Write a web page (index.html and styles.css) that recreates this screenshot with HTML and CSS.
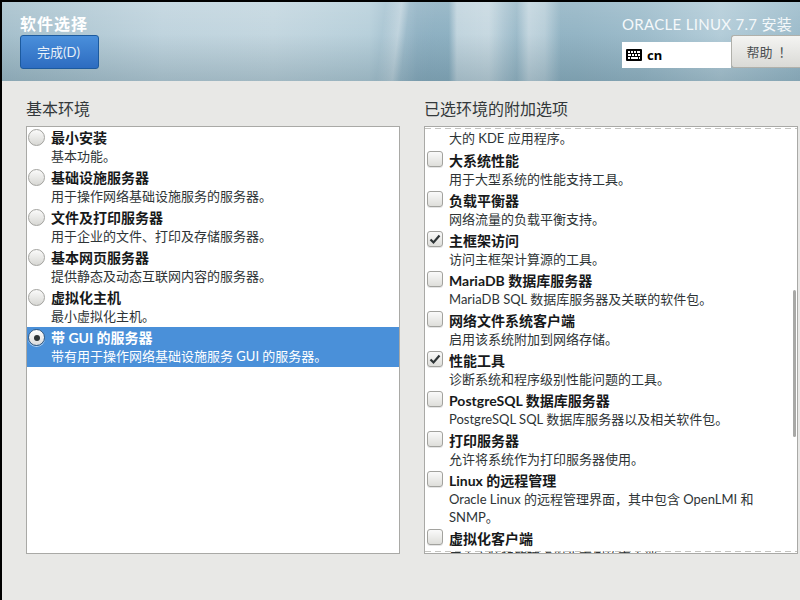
FILE: index.html
```html
<!DOCTYPE html>
<html lang="zh">
<head>
<meta charset="utf-8">
<title>软件选择</title>
<link rel="stylesheet" href="styles.css">
</head>
<body>
<div class="app">
  <header class="header">
    <div class="header-left">
      <h1 class="page-title">软件选择</h1>
      <button class="done-btn">完成(D)</button>
    </div>
    <div class="header-right">
      <div class="product">ORACLE LINUX 7.7 安装</div>
      <div class="tools">
        <div class="kbd">
          <svg class="kbd-icon" width="16" height="12" viewBox="0 0 16 12"><rect width="16" height="12" rx="1" fill="#000"/><g fill="#fff"><rect x="2" y="2" width="2" height="2"/><rect x="5" y="2" width="2" height="2"/><rect x="8" y="2" width="2" height="2"/><rect x="11" y="2" width="3" height="2"/><rect x="2" y="5" width="3" height="2"/><rect x="6" y="5" width="2" height="2"/><rect x="9" y="5" width="2" height="2"/><rect x="12" y="5" width="2" height="2"/><rect x="2" y="8" width="2" height="2"/><rect x="5" y="8" width="7" height="2"/><rect x="13" y="8" width="1" height="2"/></g></svg>
          <span>cn</span>
        </div>
        <button class="help-btn">帮助<span class="bang">！</span></button>
      </div>
    </div>
  </header>
  <main class="content">
    <section class="col">
      <h2 class="col-title">基本环境</h2>
      <div class="box envs">
        <div class="row"><span class="radio"></span><div class="txt"><div class="t">最小安装</div><div class="d">基本功能。</div></div></div>
        <div class="row"><span class="radio"></span><div class="txt"><div class="t">基础设施服务器</div><div class="d">用于操作网络基础设施服务的服务器。</div></div></div>
        <div class="row"><span class="radio"></span><div class="txt"><div class="t">文件及打印服务器</div><div class="d">用于企业的文件、打印及存储服务器。</div></div></div>
        <div class="row"><span class="radio"></span><div class="txt"><div class="t">基本网页服务器</div><div class="d">提供静态及动态互联网内容的服务器。</div></div></div>
        <div class="row"><span class="radio"></span><div class="txt"><div class="t">虚拟化主机</div><div class="d">最小虚拟化主机。</div></div></div>
        <div class="row selected"><span class="radio on"></span><div class="txt"><div class="t">带 GUI 的服务器</div><div class="d">带有用于操作网络基础设施服务 GUI 的服务器。</div></div></div>
      </div>
    </section>
    <section class="col">
      <h2 class="col-title">已选环境的附加选项</h2>
      <div class="box addons">
        <div class="list">
          <div class="partial">大的 KDE 应用程序。</div>
          <div class="row"><span class="check"></span><div class="txt"><div class="t">大系统性能</div><div class="d">用于大型系统的性能支持工具。</div></div></div>
          <div class="row"><span class="check"></span><div class="txt"><div class="t">负载平衡器</div><div class="d">网络流量的负载平衡支持。</div></div></div>
          <div class="row"><span class="check"><svg width="12" height="12" viewBox="0 0 12 12"><path d="M1.5 6.5 L4.5 9.5 L10.5 2.5" fill="none" stroke="#2e3436" stroke-width="2.2"/></svg></span><div class="txt"><div class="t">主框架访问</div><div class="d">访问主框架计算源的工具。</div></div></div>
          <div class="row"><span class="check"></span><div class="txt"><div class="t">MariaDB 数据库服务器</div><div class="d">MariaDB SQL 数据库服务器及关联的软件包。</div></div></div>
          <div class="row"><span class="check"></span><div class="txt"><div class="t">网络文件系统客户端</div><div class="d">启用该系统附加到网络存储。</div></div></div>
          <div class="row"><span class="check"><svg width="12" height="12" viewBox="0 0 12 12"><path d="M1.5 6.5 L4.5 9.5 L10.5 2.5" fill="none" stroke="#2e3436" stroke-width="2.2"/></svg></span><div class="txt"><div class="t">性能工具</div><div class="d">诊断系统和程序级别性能问题的工具。</div></div></div>
          <div class="row"><span class="check"></span><div class="txt"><div class="t">PostgreSQL 数据库服务器</div><div class="d">PostgreSQL SQL 数据库服务器以及相关软件包。</div></div></div>
          <div class="row"><span class="check"></span><div class="txt"><div class="t">打印服务器</div><div class="d">允许将系统作为打印服务器使用。</div></div></div>
          <div class="row tall"><span class="check"></span><div class="txt"><div class="t">Linux 的远程管理</div><div class="d">Oracle Linux 的远程管理界面，其中包含 OpenLMI 和 SNMP。</div></div></div>
          <div class="row"><span class="check"></span><div class="txt"><div class="t">虚拟化客户端</div><div class="d">用来安装和管理虚拟化事例的客户端。</div></div></div>
        </div>
        <div class="undershoot top"></div>
        <div class="undershoot bottom"></div>
        <div class="scrollbar"></div>
      </div>
    </section>
  </main>
</div>
</body>
</html>
```
FILE: styles.css
```css
* { box-sizing: border-box; }
html, body { margin: 0; height: 100%; overflow: hidden; }
body {
  background: #000;
  font-family: Lato, "Noto Sans CJK SC", sans-serif;
  color: #2e3436;
}
.app {
  width: 800px;
  height: 600px;
  padding: 2px 0 0 2px;
  display: flex;
  flex-direction: column;
}
.header {
  height: 79px;
  flex: none;
  display: flex;
  justify-content: space-between;
  background:
    linear-gradient(180deg, rgba(255,255,255,.12) 0%, rgba(255,255,255,0) 40%, rgba(50,85,100,.24) 100%),
    linear-gradient(97deg, rgba(255,255,255,0) 47.5%, rgba(255,255,255,.35) 49.5%, rgba(255,255,255,.06) 50.5%, rgba(255,255,255,0) 54%),
    linear-gradient(90deg, rgba(255,255,255,0) 56%, rgba(255,255,255,.45) 57%, rgba(255,255,255,.5) 61%, rgba(255,255,255,.25) 63%, rgba(255,255,255,.1) 64.5%, rgba(255,255,255,.45) 66%, rgba(255,255,255,.35) 68%, rgba(255,255,255,0) 70%),
    linear-gradient(90deg, #a6c0cc 0%, #c0d4de 20%, #c4d7e0 34%, #b8d0db 46%, #8eb0c2 52%, #8fb2c3 58%, #94b5c5 72%, #9dbccb 80%, #b4cdd9 90%, #9dbccb 100%);
}
.header-left { padding: 12px 0 0 18px; }
.page-title {
  margin: 0 0 2px;
  font-size: 16px;
  line-height: 19px;
  font-weight: 700;
  color: #fff;
  letter-spacing: 1px;
}
.done-btn {
  display: block;
  width: 79px;
  height: 34px;
  padding: 0 2px 2px 0;
  border: 1px solid #1c5a9e;
  border-radius: 3px;
  background: linear-gradient(180deg, #4a8fdb 0%, #2d6cc0 100%);
  color: #e8f0f8;
  font: inherit;
  font-size: 13px;
}
.header-right {
  width: 178px;
  display: flex;
  flex-direction: column;
  align-items: flex-end;
}
.product {
  margin: 13px 8px 0 0;
  font-size: 15px;
  line-height: 19px;
  letter-spacing: .3px;
  color: #f4f8fa;
  white-space: nowrap;
}
.tools {
  display: flex;
  align-items: flex-end;
  height: 34px;
  margin-top: 1px;
}
.kbd {
  width: 109px;
  height: 26px;
  background: #fff;
  display: flex;
  align-items: center;
  gap: 5px;
  padding-left: 4px;
  font-family: "Noto Sans", sans-serif;
  font-size: 13px;
  font-weight: 700;
  color: #000;
  margin-bottom: 1px;
}
.kbd-icon { display: block; }
.help-btn {
  width: 69px;
  height: 33px;
  padding: 0 0 0 6px;
  border: 1px solid #b0b0aa;
  border-right: 0;
  border-radius: 3px 0 0 3px;
  background: linear-gradient(180deg, #f4f4f2 0%, #dadad6 100%);
  color: #4c5052;
  font: inherit;
  font-size: 13px;
  margin-bottom: 1px;
}
.bang { margin-left: 6px; }
.content {
  flex: 1;
  display: flex;
  background: #e8e8e6;
  padding: 0 2px 46px 24px;
  gap: 24px;
  min-height: 0;
}
.col { width: 374px; display: flex; flex-direction: column; }
.col-title {
  margin: 0;
  padding-top: 18px;
  height: 45px;
  font-size: 16px;
  line-height: 20px;
  font-weight: 400;
  color: #33383a;
}
.box {
  position: relative;
  flex: 1;
  background: #fff;
  border: 1px solid #a9a9a6;
  overflow: hidden;
}
.row {
  display: flex;
  height: 40px;
}
.row.tall { height: 58px; }
.selected { background: #4a90d9; color: #fff; }
.selected .t { color: #fff; }
.radio {
  flex: none;
  width: 17px;
  height: 17px;
  margin: 2px 6px 0 1px;
  border-radius: 50%;
  border: 1px solid #a2a29e;
  background: linear-gradient(180deg, #fafafa, #d8d8d4);
  box-shadow: 0 1px 0 rgba(255,255,255,.6);
  display: flex;
  align-items: center;
  justify-content: center;
}
.radio.on { border-color: #33587f; background: linear-gradient(180deg, #fff, #dcdcdc); }
.radio.on::after {
  content: "";
  width: 6px;
  height: 6px;
  border-radius: 50%;
  background: #2e3436;
}
.check {
  flex: none;
  width: 16px;
  height: 16px;
  margin: 1px 6px 0 2px;
  border-radius: 3px;
  border: 1px solid #a2a29e;
  background: linear-gradient(180deg, #fafafa, #dededa);
  box-shadow: 0 1px 0 rgba(0,0,0,.1);
  display: flex;
  align-items: center;
  justify-content: center;
}
.txt { min-width: 0; padding-top: 2px; }
.envs .txt { padding-top: 1px; }
.envs .t { line-height: 19px; }
.t {
  font-size: 14px;
  line-height: 18px;
  font-weight: 700;
  color: #17191a;
  white-space: nowrap;
}
.d {
  font-size: 13px;
  line-height: 18px;
}
.partial {
  height: 23px;
  padding: 2px 0 0 24px;
  font-size: 13px;
  line-height: 18px;
}
.addons .txt { width: 338px; }
.undershoot {
  position: absolute;
  left: 0;
  right: 0;
  height: 1px;
  background: repeating-linear-gradient(90deg, #c4c4c0 0 6px, transparent 6px 10px);
}
.undershoot.top { top: 1px; }
.undershoot.bottom { bottom: 1px; }
.scrollbar {
  position: absolute;
  right: 1px;
  top: 163px;
  width: 3px;
  height: 147px;
  border-radius: 2px;
  background: #a8a8a6;
}
```
